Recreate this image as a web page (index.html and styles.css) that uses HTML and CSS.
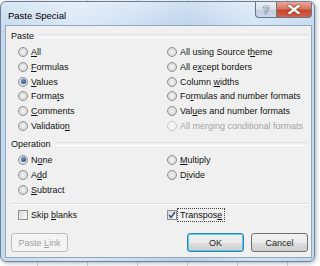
FILE: index.html
```html
<!DOCTYPE html>
<html lang="en">
<head>
  <meta charset="UTF-8">
  <title>Paste Special</title>
  <link rel="stylesheet" href="styles.css">
</head>
<body>
  <div class="window">
    <div class="titlebar">
      <span class="title">Paste Special</span>
      <div class="caption-btns">
        <span class="cap help">?</span>
        <span class="cap close">
          <svg width="12" height="9" viewBox="0 0 12 9"><path d="M1.5 1 L10.5 8 M10.5 1 L1.5 8" stroke="#fff" stroke-width="2.4" stroke-linecap="square"/></svg>
        </span>
      </div>
    </div>

    <div class="client">
      <!-- Paste group -->
      <div class="group-head"><span>Paste</span></div>
      <div class="opts paste-opts">
        <div class="opt"><span class="radio"></span><span><u>A</u>ll</span></div>
        <div class="opt"><span class="radio"></span><span>All using Source t<u>h</u>eme</span></div>
        <div class="opt"><span class="radio"></span><span><u>F</u>ormulas</span></div>
        <div class="opt"><span class="radio"></span><span>All e<u>x</u>cept borders</span></div>
        <div class="opt"><span class="radio on"></span><span><u>V</u>alues</span></div>
        <div class="opt"><span class="radio"></span><span>Column <u>w</u>idths</span></div>
        <div class="opt"><span class="radio"></span><span>Forma<u>t</u>s</span></div>
        <div class="opt"><span class="radio"></span><span>Fo<u>r</u>mulas and number formats</span></div>
        <div class="opt"><span class="radio"></span><span><u>C</u>omments</span></div>
        <div class="opt"><span class="radio"></span><span>Val<u>u</u>es and number formats</span></div>
        <div class="opt"><span class="radio"></span><span>Validatio<u>n</u></span></div>
        <div class="opt disabled"><span class="radio"></span><span>All mer<u>g</u>ing conditional formats</span></div>
      </div>

      <!-- Operation group -->
      <div class="group-head op-head"><span>Operation</span></div>
      <div class="opts op-opts">
        <div class="opt"><span class="radio on"></span><span>N<u>o</u>ne</span></div>
        <div class="opt"><span class="radio"></span><span><u>M</u>ultiply</span></div>
        <div class="opt"><span class="radio"></span><span>A<u>d</u>d</span></div>
        <div class="opt"><span class="radio"></span><span>D<u>i</u>vide</span></div>
        <div class="opt"><span class="radio"></span><span><u>S</u>ubtract</span></div>
      </div>

      <div class="separator"></div>

      <div class="opts checks">
        <div class="opt"><span class="check"></span><span>Skip <u>b</u>lanks</span></div>
        <div class="opt">
          <span class="check on">
            <svg width="8" height="8" viewBox="0 0 8 8"><path d="M1 4 L3 6.5 L7 1" fill="none" stroke="#3a4f8c" stroke-width="1.5"/></svg>
          </span>
          <span class="focus">Transpos<u>e</u></span>
        </div>
      </div>

      <div class="buttons">
        <span class="btn disabled"><span>Paste <u>L</u>ink</span></span>
        <span class="spacer"></span>
        <span class="btn default"><span>OK</span></span>
        <span class="btn"><span>Cancel</span></span>
      </div>
    </div>
  </div>
</body>
</html>
```

FILE: styles.css
```css
/* Page behind the dialog: a worksheet grid */
* {
  box-sizing: border-box;
}
body {
  margin: 0;
  width: 320px;
  height: 266px;
  overflow: hidden;
  font-family: "Liberation Sans", Arial, sans-serif;
  font-size: 9px;
  color: #111;
  background-color: #fff;
  background-image: linear-gradient(90deg, #d4d4d4 1px, transparent 1px);
  background-size: 50px 100%;
  background-position: 37px 0;
}
u {
  text-decoration-thickness: 1px;
  text-underline-offset: 1px;
}
/* Window frame */
.window {
  width: 315px;
  height: 261px;
  margin-top: 1px;
  border: 1px solid #6f8096;
  border-radius: 6px;
  padding: 0 2px 3px 4px;
  display: flex;
  flex-direction: column;
  background:
    linear-gradient(180deg, rgba(255,255,255,0.35), rgba(255,255,255,0) 30px),
    linear-gradient(90deg, #c5d9ee 0%, #d9e7f6 25%, #c8dcf1 45%, #b9d0ea 60%, #d2e3f4 80%, #c3d7ed 100%);
  box-shadow: 1px 1px 4px rgba(60, 80, 110, 0.45);
}
.titlebar {
  height: 23px;
  display: flex;
  align-items: center;
  padding-left: 3px;
}
.title {
  font-size: 9.5px;
  color: #000;
  padding-top: 3px;
}
.caption-btns {
  margin-left: auto;
  align-self: flex-start;
  display: flex;
}
.cap {
  height: 16px;
  display: flex;
  align-items: center;
  justify-content: center;
  border: 1px solid #65768c;
  border-top: none;
}
.cap.help {
  width: 21px;
  border-radius: 0 0 0 4px;
  border-right: none;
  background: linear-gradient(180deg, #e8eef5 0%, #d6dfea 50%, #c0cddd 55%, #ccd8e7 100%);
  font-size: 11px;
  color: #f7f9fc;
  text-shadow: 0 0 1px #2f4157, 0 0 1px #2f4157, 0 0 1px #2f4157;
}
.cap.close {
  width: 36px;
  border-radius: 0 0 4px 0;
  background: linear-gradient(180deg, #e9a89b 0%, #d8775f 45%, #c7432c 55%, #d5634a 100%);
}
.cap.close svg {
  filter: drop-shadow(0 0 1px #6d1f13);
}
/* Client area */
.client {
  flex: 1;
  border: 1px solid #91a6bf;
  background: #f0f0f0;
  padding: 0 3px 0 5px;
  display: flex;
  flex-direction: column;
}
.group-head {
  height: 14px;
  margin-top: 3px;
  display: flex;
  align-items: center;
  gap: 5px;
}
.group-head::after {
  content: "";
  flex: 1;
  height: 2px;
  border-top: 1px solid #d9dee4;
  border-bottom: 1px solid #fff;
  margin-right: 1px;
}
.op-head {
  margin-top: 3.6px;
}
.opts {
  display: grid;
  grid-template-columns: 149px 1fr;
  padding-left: 7px;
}
.paste-opts {
  margin-top: 1.6px;
  grid-auto-rows: 14.8px;
}
.op-opts {
  margin-top: 1.5px;
  grid-auto-rows: 15px;
}
.opt {
  display: flex;
  align-items: center;
  gap: 3px;
  white-space: nowrap;
}
.opt.disabled {
  color: #a3a3a3;
}
.radio {
  width: 10px;
  height: 10px;
  border-radius: 50%;
  border: 1px solid #8d9094;
  background: radial-gradient(circle at 50% 50%, #f6f6f6 0%, #dcdcdc 60%, #cfd1d3 100%);
  display: flex;
  align-items: center;
  justify-content: center;
  flex: none;
}
.radio.on::after {
  content: "";
  width: 5px;
  height: 5px;
  border-radius: 50%;
  background: radial-gradient(circle at 40% 35%, #6a90c8, #1d3a78);
}
.disabled .radio {
  border-color: #c6c8ca;
  background: #f4f4f4;
}
.separator {
  margin: 6px 1px 0 0;
  height: 2px;
  border-top: 1px solid #d9dee4;
  border-bottom: 1px solid #fff;
}
.checks {
  margin-top: 3px;
  grid-auto-rows: 14px;
}
.check {
  width: 10px;
  height: 10px;
  border: 1px solid #8e8f8f;
  background: linear-gradient(135deg, #d8d8d8, #f7f7f7);
  display: flex;
  align-items: center;
  justify-content: center;
  flex: none;
}
.focus {
  outline: 1px dotted #444;
  outline-offset: 1px;
  padding: 0 1px;
  margin-left: -1px;
}
/* Buttons row */
.buttons {
  display: flex;
  gap: 7px;
  margin-top: 11px;
}
.spacer {
  flex: 1;
}
.btn {
  width: 57px;
  height: 19px;
  border: 1px solid #707070;
  border-radius: 3px;
  display: flex;
  align-items: center;
  justify-content: center;
  background: linear-gradient(180deg, #f2f2f2 0%, #ebebeb 50%, #dddddd 51%, #cfcfcf 100%);
  color: #1c1c1c;
}
.btn.disabled {
  border-color: #bcbcbc;
  background: #f4f4f4;
  color: #a0a0a0;
}
.btn.default {
  border-color: #3c7fb1;
  box-shadow: inset 0 0 0 1px #48d0f4;
}
```
